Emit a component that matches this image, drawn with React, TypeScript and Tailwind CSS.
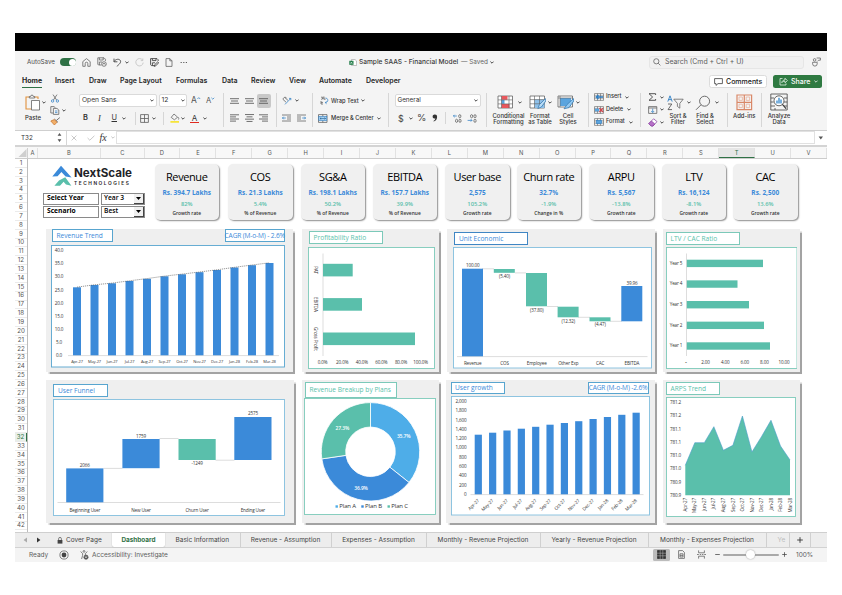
import type { ReactNode } from "react";

const BLUE = "#3b8ad9";
const TEAL = "#5abfab";
const MONTHS = ["Apr-27", "May-27", "Jun-27", "Jul-27", "Aug-27", "Sep-27", "Oct-27", "Nov-27", "Dec-27", "Jan-28", "Feb-28", "Mar-28"];

type IconProps = { w: number; h: number; className?: string; children: ReactNode };

const Icon = ({ w, h, className = "", children }: IconProps) => (
  <svg width={w} height={h} viewBox={`0 0 ${w} ${h}`} className={`shrink-0 ${className}`} fill="none" stroke="#5c5c5c" strokeWidth={0.75}>
    {children}
  </svg>
);

const Chevron = ({ className = "" }: { className?: string }) => (
  <Icon w={4} h={3} className={className}>
    <path d="M0.4 0.6 L2 2.2 L3.6 0.6" stroke="#333" strokeWidth={0.9} />
  </Icon>
);

const Divider = ({ className = "" }: { className?: string }) => (
  <div className={`w-px shrink-0 bg-[#d6d6d6] ${className}`} />
);

/* ---------- Title bar ---------- */

const TitleBar = () => (
  <div className="flex h-[22px] items-center text-[#4a4a4a]">
    <span className="ml-[12px] w-[33px] text-[6.2px]">AutoSave</span>
    <div className="flex h-[8px] w-[16px] items-center justify-end rounded-full bg-[#2f7145] pr-[0.5px]">
      <div className="size-[7px] rounded-full bg-white" />
    </div>
    <Icon w={9} h={9} className="ml-[6px]">
      <path d="M0.8 3.6 L4.5 0.6 L8.2 3.6 V8.3 H5.8 V5.5 A1.3 1.3 0 0 0 3.2 5.5 V8.3 H0.8 Z" />
    </Icon>
    <Icon w={10} h={10} className="ml-[6px]">
      <path d="M4.5 8 H1.5 L0.8 7.2 V0.8 H7 L8.4 2.2 V4 M2.4 0.8 V3 H6.2 V0.8 M2.4 8 V5 H5" />
      <circle cx="7" cy="7" r="2.3" />
      <path d="M5.8 7.6 L7 6 L8.2 7.6" />
    </Icon>
    <Icon w={9} h={9} className="ml-[6px]">
      <path d="M1 0.6 V3.8 H4.4 M1 3.6 C2.8 0.8 6.2 0.6 7.4 2.6 C8.3 4.6 6 6.5 3.8 8.4" stroke="#444" strokeWidth={0.9} />
    </Icon>
    <Chevron className="ml-[3px]" />
    <Icon w={9} h={9} className="ml-[6px]">
      <path d="M7.6 2.2 A3.7 3.7 0 1 0 8.2 4.6 M7.8 0.5 V2.6 H5.8" stroke="#bdbdbd" />
    </Icon>
    <Icon w={9} h={9} className="ml-[6px]">
      <path d="M4 7.6 H1.4 L0.6 6.8 V0.6 H7 L8.2 1.8 V3 M2.4 0.6 V2.6 H6 V0.6 M2.4 7.6 V4.8 H5 M4.2 8.4 L4.8 6.6 L7.8 3.8 L8.7 4.7 L5.8 7.8 Z" stroke="#444" strokeWidth={0.9} />
    </Icon>
    <Icon w={8} h={9} className="ml-[6px]">
      <path d="M1 0.6 H4.8 L7 2.8 V8.4 H1 Z M4.8 0.6 V2.8 H7" />
    </Icon>
    <Icon w={8} h={3} className="ml-[7px]">
      <path d="M0.6 1.5 h1.2 M3.2 1.5 h1.2 M5.8 1.5 h1.2" strokeWidth={1.1} />
    </Icon>
    <Icon w={8} h={7} className="ml-[161px]">
      <path d="M2.5 0.5 H6 L7.6 2 V6.5 H2.5 Z" fill="#fff" stroke="#9a9a9a" strokeWidth={0.6} />
      <rect x="0.3" y="1.8" width="4.2" height="4" fill="#1d7a45" stroke="none" />
      <path d="M1.5 2.8 L3.3 4.8 M3.3 2.8 L1.5 4.8" stroke="#fff" strokeWidth={0.6} />
    </Icon>
    <span className="ml-[2px] w-[102px] text-[6.6px] font-medium text-[#3a3a3a]">Sample SAAS - Financial Model</span>
    <span className="w-[28px] text-[6.4px] text-[#666]">— Saved</span>
    <Chevron className="ml-px" />
    <div className="ml-[155px] flex h-[13px] w-[155px] items-center rounded-[3px] border border-[#e6e6e6] bg-[#f1f1f1]">
      <Icon w={8} h={8} className="ml-[3px]">
        <circle cx="3.3" cy="3.3" r="2.6" />
        <path d="M5.2 5.2 L7.4 7.4" />
      </Icon>
      <span className="ml-[4px] text-[6.9px] text-[#5c5c5c]">Search (Cmd + Ctrl + U)</span>
    </div>
    <Icon w={9} h={10} className="ml-[8px]">
      <circle cx="2.6" cy="2.9" r="1.3" />
      <path d="M0.6 5.3 H5.2 V6.8 A2.3 2.3 0 0 1 0.6 6.8 Z M4.6 1 H8.4 V3.2 H6.6 L5.4 4.4" />
    </Icon>
  </div>
);

const MENU = [
  { label: "Home", width: "w-[33px]", active: true },
  { label: "Insert", width: "w-[34px]" },
  { label: "Draw", width: "w-[31px]" },
  { label: "Page Layout", width: "w-[56px]" },
  { label: "Formulas", width: "w-[46px]" },
  { label: "Data", width: "w-[29px]" },
  { label: "Review", width: "w-[38px]" },
  { label: "View", width: "w-[30px]" },
  { label: "Automate", width: "w-[47px]" },
  { label: "Developer", width: "w-[343px]" },
];

const MenuBar = () => (
  <div className="flex h-[18px] pl-[7px]">
    {MENU.map((item) => (
      <div key={item.label} className={`shrink-0 pt-[4px] text-[7px] text-[#262626] ${item.width} ${item.active ? "font-bold" : "font-semibold"}`}>
        <span className={`inline-block h-[11px] ${item.active ? "border-b-[1.5px] border-[#2f7145]" : ""}`}>{item.label}</span>
      </div>
    ))}
    <div className="mt-[2px] flex h-[13px] w-[58px] shrink-0 items-center rounded-[2.5px] border border-[#dcdcdc] bg-white pl-[4px] text-[7px] font-medium text-[#222]">
      <Icon w={9} h={8} className="mr-[3px]">
        <path d="M0.6 0.6 H8.4 V5.6 H4 L2 7.4 V5.6 H0.6 Z" stroke="#333" />
      </Icon>
      Comments
    </div>
    <div className="mt-[2px] ml-[6px] flex h-[13px] w-[49px] shrink-0 items-center rounded-[2.5px] bg-[#2f7a42] pl-[6px] text-[7px] font-medium text-white">
      <Icon w={9} h={9} className="mr-[3px]">
        <path d="M3.5 1.5 H1 V8 H7 V6.4 M2.8 5.6 C3 3.8 4.4 3 6 3 V1.2 L8.4 3.6 L6 5.8 V4.3 C4.6 4.2 3.5 4.6 2.8 5.6 Z" stroke="#e8f4ea" />
      </Icon>
      <span className="w-[23px]">Share</span>
      <Icon w={4} h={3}>
        <path d="M0.4 0.6 L2 2.2 L3.6 0.6" stroke="#fff" />
      </Icon>
    </div>
  </div>
);

/* ---------- Ribbon ---------- */

const Lines = ({ widths, className = "" }: { widths: number[]; className?: string }) => (
  <Icon w={9} h={8} className={className}>
    {widths.map((w, i) => (
      <path key={i} d={`M${(9 - w) / 2} ${4 + (i - (widths.length - 1) / 2) * 2.3} h${w}`} stroke="#4d4d4d" strokeWidth={0.8} />
    ))}
  </Icon>
);

const LeftLines = ({ right = false, className = "" }: { right?: boolean; className?: string }) => (
  <Icon w={9} h={8} className={className}>
    {[9, 6, 9, 6].map((w, i) => (
      <path key={i} d={`M${right ? 9 - w : 0} ${0.8 + i * 2.1} h${w}`} stroke="#4d4d4d" strokeWidth={0.8} />
    ))}
  </Icon>
);

const Indent = ({ className = "" }: { className?: string }) => (
  <Icon w={9} h={8} className={className}>
    <path d="M0 1 H9 M5 3 H9 M5 5 H9 M0 7 H9" />
    <path d="M0.4 4 H3.8 M1.7 2.7 L0.4 4 L1.7 5.3" stroke="#2f7fc4" />
  </Icon>
);

const CellsIcon = ({ mark }: { mark: "insert" | "delete" | "format" }) => (
  <Icon w={10} h={8}>
    <path d="M0.5 0.6 H9.5 V7.4 H0.5 Z M0.5 2.9 H9.5 M0.5 5.1 H9.5 M3.5 0.6 V7.4 M6.5 0.6 V7.4" strokeWidth={0.6} />
    {mark === "insert" && <path d="M2.5 4 H9 M4.4 2 L2.4 4 L4.4 6" stroke="#2f7fc4" strokeWidth={1.4} />}
    {mark === "delete" && (
      <>
        <rect x="1" y="2.6" width="4" height="2.8" fill="#5aa4de" stroke="none" />
        <path d="M5.4 2.2 L9 6 M9 2.2 L5.4 6" stroke="#d9434a" strokeWidth={1.1} />
      </>
    )}
    {mark === "format" && <rect x="2.5" y="2.4" width="5" height="3.2" fill="#5aa4de" stroke="#2f7fc4" strokeWidth={0.6} />}
  </Icon>
);

const BigLabel = ({ children }: { children: ReactNode }) => (
  <div className="text-center text-[5.9px] leading-[6.6px] font-medium text-[#333]">{children}</div>
);

const GridIcon = ({ variant }: { variant: "conditional" | "table" | "cell" }) => (
  <Icon w={17} h={15}>
    {variant === "cell" ? (
      <path d="M1 1 H15.5 V12 H1 Z" fill="#fff" />
    ) : (
      <path d="M1 1 H15.5 V13 H1 Z" fill="#fff" />
    )}
    {variant === "conditional" && (
      <>
        <rect x="4.5" y="1" width="6" height="3.8" fill="#e8575c" stroke="none" />
        <rect x="4.5" y="5" width="3" height="3.8" fill="#5aa4de" stroke="none" />
        <rect x="4.5" y="9" width="8" height="4" fill="#e8575c" stroke="none" />
        <path d="M1 4.9 H15.5 M1 8.9 H15.5 M4.5 1 V13 M12 1 V13" strokeWidth={0.6} />
      </>
    )}
    {variant === "table" && (
      <>
        <rect x="5.5" y="4.5" width="10" height="8.5" fill="#8fc1ea" stroke="none" />
        <path d="M1 4.6 H15.5 M1 8.8 H15.5 M5.5 1 V13 M10.5 1 V13" strokeWidth={0.6} />
        <path d="M16.4 3.6 L10.4 9.6 L8.8 13.6 L12.4 12 L16.8 6 Z" fill="#b9dcf6" stroke="#3477ad" />
      </>
    )}
    {variant === "cell" && (
      <>
        <rect x="3" y="3" width="11" height="8" fill="#5aa4de" stroke="none" />
        <path d="M1 3 H15.5 M3 1 V12" strokeWidth={0.6} />
        <path d="M16.4 3.6 L10 9.6 L7 13.8 L12 12.6 L16.8 6 Z" fill="#8fc8f2" stroke="#3477ad" />
      </>
    )}
  </Icon>
);

const Ribbon = () => (
  <div className="flex h-[39.5px] border-b border-[#cfcfcf] text-[#333]">
    <div className="ml-[10px] w-[22px] shrink-0 pt-[3px]">
      <div className="flex items-center">
        <Icon w={16} h={17}>
          <path d="M6 15 H1 V3 H4.5 M9.5 3 H13 V5" stroke="#e0913c" strokeWidth={1.1} />
          <path d="M4.3 4 V2.5 H5.6 A1.4 1.4 0 0 1 8.4 2.5 H9.7 V4 Z" />
          <path d="M6.5 6.5 H14.5 V16 H6.5 Z" fill="#fff" />
        </Icon>
        <Chevron className="ml-px" />
      </div>
      <span className="block pt-[2.5px] text-[6px] leading-[7px] font-medium">Paste</span>
    </div>
    <div className="ml-[2.5px] w-[29.5px] shrink-0 pt-[3px]">
      <Icon w={10} h={9}>
        <path d="M3 0.6 L6.6 6 M7 0.6 L3.4 6" />
        <circle cx="2.6" cy="7" r="1.2" stroke="#2f7fc4" />
        <circle cx="7.4" cy="7" r="1.2" stroke="#2f7fc4" />
      </Icon>
      <div className="mt-[2.5px] flex items-center">
        <Icon w={10} h={9}>
          <path d="M3 7 H0.8 V0.6 H4 L5.6 2 M3.4 2.4 H7 L8.8 4 V8.4 H3.4 Z" />
          <path d="M5 5 h2.4 M5 6.6 h2.4" stroke="#2f7fc4" />
        </Icon>
        <Chevron className="ml-[2.5px]" />
      </div>
      <Icon w={11} h={9} className="mt-[2.5px]">
        <path d="M9.8 0.6 L6.4 3.4 M4.4 2 L8 5.4" stroke="#444" />
        <path d="M4.2 2.6 L0.8 4 L4.4 8 L7 5.2 Z" fill="#f2b06a" stroke="#c9752e" />
      </Icon>
    </div>
    <div className="w-[144px] shrink-0 pt-[3px]">
      <div className="flex h-[13px] items-center text-[6.7px]">
        <div className="flex h-[13px] w-[78px] items-center justify-between rounded-[2px] border border-[#dadada] bg-white px-[2px]">
          <span>Open Sans</span>
          <Chevron />
        </div>
        <div className="ml-[2px] flex h-[13px] w-[28px] items-center justify-between rounded-[2px] border border-[#dadada] bg-white px-[1.5px]">
          <span>12</span>
          <Chevron />
        </div>
        <span className="ml-[4px] text-[8.5px] text-[#555]">A</span>
        <Icon w={4} h={8}>
          <path d="M0.4 2 L1.8 0.6 L3.2 2" stroke="#2f7fc4" />
        </Icon>
        <span className="ml-[5px] text-[7.6px] text-[#555]">A</span>
        <Icon w={4} h={8}>
          <path d="M0.4 0.8 L1.8 2.2 L3.2 0.8" stroke="#2f7fc4" />
        </Icon>
      </div>
      <div className="mt-[4px] flex h-[14px] items-center text-[7.4px]">
        <span className="w-[14px] pl-[4px] font-semibold">B</span>
        <span className="w-[15px] pl-[5px] font-[Liberation_Serif] text-[8.5px] italic">I</span>
        <span className="w-[14px] pl-[3.5px] underline">U</span>
        <Chevron />
        <Divider className="ml-[8.5px] h-[13px]" />
        <Icon w={9} h={9} className="ml-[4px]">
          <path d="M0.6 0.6 H8.4 V8.4 M0.6 0.6 V8.4 M4.5 0.6 V8.4 M0.6 4.5 H8.4 M0.6 8.4 H8.4" strokeWidth={0.8} />
        </Icon>
        <Chevron className="ml-[3px]" />
        <Divider className="ml-[7px] h-[13px]" />
        <Icon w={10} h={10} className="ml-[6px]">
          <path d="M4 1 L7.6 4.2 L4.4 6.8 L1.2 4.4 Z M7.8 4 C9 5 9 6.2 8.4 6.6" />
          <path d="M0.4 8.9 H9" stroke="#f7e326" strokeWidth={1.6} />
        </Icon>
        <Chevron className="ml-[1.5px]" />
        <div className="ml-[5px] flex h-[10px] w-[9px] items-center justify-center border-b-[1.7px] border-[#e02b20] text-[8px] leading-none">A</div>
        <Chevron className="ml-[4px]" />
      </div>
    </div>
    <Divider className="mt-[2px] h-[34px]" />
    <div className="w-[52px] shrink-0 pt-[3px]">
      <div className="flex h-[13px] items-center">
        <Lines widths={[9, 7, 9]} className="ml-[6px]" />
        <Lines widths={[9, 7, 9]} className="ml-[5.5px]" />
        <div className="ml-[3px] flex h-[14px] w-[14px] items-center justify-center rounded-[2px] bg-[#c8c8c8]">
          <Lines widths={[9, 7, 9]} />
        </div>
      </div>
      <div className="mt-[4px] flex h-[14px] items-center">
        <LeftLines className="ml-[6px]" />
        <Lines widths={[9, 6, 9, 6]} className="ml-[5.5px]" />
        <LeftLines right className="ml-[5.5px]" />
      </div>
    </div>
    <Divider className="mt-[2px] h-[34px]" />
    <div className="w-[35px] shrink-0 pt-[3px]">
      <div className="flex h-[13px] items-center">
        <Icon w={10} h={9} className="ml-[5px]">
          <path d="M1 3.4 L4 6.2 M2.6 1.4 L6 4.4 M1 3.4 C1 1.4 4 0.6 4.6 2.2" />
          <path d="M3 8.4 L8.8 2.4 M8.8 4.2 V2.4 H7" stroke="#2f7fc4" />
        </Icon>
        <Chevron className="ml-[3px]" />
      </div>
      <div className="mt-[4px] flex h-[14px] items-center">
        <Indent className="ml-[4.5px]" />
        <Indent className="ml-[6px] -scale-x-100" />
      </div>
    </div>
    <Divider className="mt-[2px] h-[34px]" />
    <div className="w-[75px] shrink-0 pt-[3px] text-[5.7px] font-medium">
      <div className="flex h-[13px] items-center">
        <Icon w={9} h={9} className="ml-[6.5px]">
          <path d="M1 1.4 A1 1 0 1 1 1 3 M3 0.6 V3.4 M4 0.6 V3.2 H5.6 M1 5 V8 H3 M1 6.4 H3" />
          <path d="M5.5 2 C8.6 2 8.6 6.6 5.4 6.6 M6.6 5.4 L5.2 6.6 L6.6 7.8" stroke="#2f7fc4" />
        </Icon>
        <span className="ml-[2.5px] w-[30px]">Wrap Text</span>
        <Chevron />
      </div>
      <div className="mt-[4px] flex h-[14px] items-center">
        <Icon w={10} h={9} className="ml-[5px]">
          <path d="M0.5 0.6 H9 V8.4 H0.5 Z M4.8 0.6 V2.6 M4.8 6.4 V8.4" />
          <rect x="0.8" y="2.6" width="8" height="3.8" fill="#a9d3f3" stroke="#2f7fc4" strokeWidth={0.6} />
          <path d="M2 4.5 H7.6 M3.2 3.6 L2 4.5 L3.2 5.4 M6.4 3.6 L7.6 4.5 L6.4 5.4" stroke="#245f91" strokeWidth={0.6} />
        </Icon>
        <span className="ml-[3px] w-[46px]">Merge &amp; Center</span>
        <Chevron />
      </div>
    </div>
    <Divider className="mt-[2px] h-[34px]" />
    <div className="w-[96.5px] shrink-0 pt-[3px]">
      <div className="ml-[5.5px] flex h-[13px] w-[86px] items-center justify-between rounded-[2px] border border-[#dadada] bg-white px-[2px] text-[6.3px]">
        <span>General</span>
        <Chevron />
      </div>
      <div className="mt-[4px] flex h-[14px] items-center text-[9px] text-[#444]">
        <span className="ml-[9px] w-[11px]">$</span>
        <Chevron />
        <span className="ml-[4px] w-[15px] text-[9.5px]">%</span>
        <Icon w={6} h={8} className="mr-[7px]">
          <path d="M3 0.6 A2 2 0 1 0 3.4 4.4 C3.2 5.6 2.4 6.4 1.4 6.9 L1.8 7.6 C4 6.8 5.2 5 5.1 2.8 A2.1 2.1 0 0 0 3 0.6 Z" fill="#333" stroke="none" />
        </Icon>
        <Divider className="h-[12px]" />
        <Icon w={9} h={9} className="ml-[7px]">
          <path d="M0.4 2 H3.8 M1.6 0.8 L0.4 2 L1.6 3.2" stroke="#2f7fc4" />
          <ellipse cx="6.8" cy="2.2" rx="1.1" ry="1.6" />
          <ellipse cx="3.6" cy="6.8" rx="1.1" ry="1.6" />
          <ellipse cx="7" cy="6.8" rx="1.1" ry="1.6" />
        </Icon>
        <Icon w={10} h={9} className="ml-[5px]">
          <ellipse cx="4.6" cy="2.2" rx="1.1" ry="1.6" />
          <ellipse cx="8" cy="2.2" rx="1.1" ry="1.6" />
          <ellipse cx="8" cy="6.8" rx="1.1" ry="1.6" />
          <path d="M0.6 6.4 H5 M3.8 5.2 L5 6.4 L3.8 7.6" stroke="#2f7fc4" />
        </Icon>
      </div>
    </div>
    <Divider className="mt-[2px] h-[34px]" />
    <div className="flex w-[101px] shrink-0 pt-[3px]">
      <div className="ml-[4px] w-[36px]">
        <div className="flex h-[18.5px] items-center pb-[2px] pl-[6.5px]">
          <GridIcon variant="conditional" />
          <Chevron className="ml-[4px]" />
        </div>
        <BigLabel>Conditional<br />Formatting</BigLabel>
      </div>
      <div className="w-[27px]">
        <div className="flex h-[18.5px] items-center pb-[2px] pl-[2px]">
          <GridIcon variant="table" />
          <Chevron className="ml-[2px]" />
        </div>
        <BigLabel>Format<br />as Table</BigLabel>
      </div>
      <div className="w-[29px]">
        <div className="flex h-[18.5px] items-center pb-[2px] pl-[3px]">
          <GridIcon variant="cell" />
          <Chevron className="ml-[2px]" />
        </div>
        <BigLabel>Cell<br />Styles</BigLabel>
      </div>
    </div>
    <Divider className="mt-[2px] h-[34px]" />
    <div className="w-[51px] shrink-0 pl-[5px] text-[5.6px] font-medium">
      <div className="flex h-[12.5px] items-center">
        <CellsIcon mark="insert" />
        <span className="ml-[2.5px] w-[19px]">Insert</span>
        <Chevron />
      </div>
      <div className="flex h-[12.5px] items-center">
        <CellsIcon mark="delete" />
        <span className="ml-[2.5px] w-[21px]">Delete</span>
        <Chevron />
      </div>
      <div className="flex h-[12.5px] items-center">
        <CellsIcon mark="format" />
        <span className="ml-[2.5px] w-[23px]">Format</span>
        <Chevron />
      </div>
    </div>
    <Divider className="mt-[2px] h-[34px]" />
    <div className="w-[24px] shrink-0 pl-[7px]">
      <div className="flex h-[12.5px] items-center">
        <Icon w={9} h={8}>
          <path d="M7.6 2 V0.7 H1 L4.6 4 L1 7.3 H7.6 V6" stroke="#444" strokeWidth={0.9} />
        </Icon>
        <Chevron className="ml-[3.5px]" />
      </div>
      <div className="flex h-[12.5px] items-center">
        <Icon w={10} h={8}>
          <path d="M0.6 0.6 H8.8 V7.4 H0.6 Z M0.6 2 H8.8" />
          <path d="M4.7 2.6 V6.4 M3.2 5 L4.7 6.5 L6.2 5" stroke="#2f7fc4" />
        </Icon>
        <Chevron className="ml-[2.5px]" />
      </div>
      <div className="flex h-[12.5px] items-center">
        <Icon w={10} h={9}>
          <path d="M5.6 0.8 L9 3.6 L5 8 L3.2 8 L0.8 5.6 Z" fill="#fff" stroke="#8a3fa0" />
          <path d="M3.4 3 L6.8 6 L5 8 L3.2 8 L0.8 5.6 Z" fill="#b671c8" stroke="#8a3fa0" />
        </Icon>
        <Chevron className="ml-[2.5px]" />
      </div>
    </div>
    <div className="flex w-[62.5px] shrink-0 pt-[3px]">
      <div className="w-[27px]">
        <div className="flex h-[18.5px] items-center pb-[1px] pl-[2px]">
          <Icon w={17} h={16}>
            <path d="M0.8 6.6 L3 0.8 L5.2 6.6 M1.6 4.6 H4.4" stroke="#2f7fc4" strokeWidth={0.9} />
            <path d="M1 9 H4.8 L1 14.6 H5" strokeWidth={0.9} />
            <path d="M6.8 4.2 H16.2 L12.8 8.4 V13.2 L10.4 11.4 V8.4 Z" />
          </Icon>
          <Chevron className="ml-[3px]" />
        </div>
        <BigLabel>Sort &amp;<br />Filter</BigLabel>
      </div>
      <div className="w-[27px]">
        <div className="flex h-[18.5px] items-center pb-[1px] pl-[3px]">
          <Icon w={16} h={16}>
            <circle cx="9.6" cy="6.2" r="5" strokeWidth={0.9} />
            <path d="M6 9.8 L1 14.8" strokeWidth={0.9} />
          </Icon>
          <Chevron className="ml-[4px]" />
        </div>
        <BigLabel>Find &amp;<br />Select</BigLabel>
      </div>
    </div>
    <Divider className="mt-[2px] h-[34px]" />
    <div className="w-[32.5px] shrink-0 pt-[2.5px]">
      <div className="flex h-[19px] justify-center pb-[2px]">
        <Icon w={17} h={17}>
          <path d="M1 1 H15.6 V15.6 H1 Z M8.3 1 V15.6 M1 8.3 H15.6" stroke="#d98868" strokeWidth={1.2} />
          <path d="M3 3 H6.4 V6.4 H3 Z M10.2 3 H13.6 V6.4 H10.2 Z M3 10.2 H6.4 V13.6 H3 Z M10.2 10.2 H13.6 V13.6 H10.2 Z" stroke="#e8b39e" strokeWidth={0.8} />
        </Icon>
      </div>
      <BigLabel>Add-ins</BigLabel>
    </div>
    <Divider className="mt-[2px] h-[34px]" />
    <div className="w-[35px] shrink-0 pt-[2px]">
      <div className="flex h-[19.5px] justify-center">
        <Icon w={18} h={18}>
          <path d="M0.8 1 H17.2 V17 H0.8 Z M0.8 5 H4 M14 5 H17.2 M0.8 9 H3.6 M14 9 H17.2 M0.8 13 H5 M14 13 H17.2 M5 15 V17" stroke="#444" strokeWidth={0.8} />
          <circle cx="9" cy="7.8" r="5" fill="#fff" stroke="#333" />
          <path d="M12.4 11.4 L16 15.6" stroke="#333" strokeWidth={1.1} />
          <path d="M7 10.6 V7.6 M9 10.6 V4.8 M11 10.6 V6.6" stroke="#3f8fd0" strokeWidth={1.4} />
        </Icon>
      </div>
      <BigLabel>Analyze<br />Data</BigLabel>
    </div>
  </div>
);

const FormulaBar = () => (
  <div className="flex h-[14.5px] items-center bg-white text-[#333]">
    <span className="w-[42px] pt-px pl-[6px] text-[6.3px]">T32</span>
    <Icon w={5} h={11}>
      <path d="M0.6 3.8 L2.5 1 L4.4 3.8 Z M0.6 7.2 L2.5 10 L4.4 7.2 Z" fill="#555" stroke="none" />
    </Icon>
    <Divider className="ml-[4px] h-[14px]" />
    <Icon w={6} h={6} className="ml-[4px]">
      <path d="M0.6 0.6 L5.4 5.4 M5.4 0.6 L0.6 5.4" stroke="#b5b5b5" />
    </Icon>
    <Icon w={8} h={6} className="ml-[10px]">
      <path d="M0.6 3 L2.8 5.2 L7.4 0.8" stroke="#b5b5b5" />
    </Icon>
    <span className="ml-[4.5px] w-[10px] font-[Liberation_Serif] text-[10px] italic">fx</span>
    <Icon w={4} h={3} className="ml-[1px]">
      <path d="M0.4 0.6 L2 2.2 L3.6 0.6" stroke="#aaa" strokeWidth={0.7} />
    </Icon>
    <div className="ml-[1px] h-[13px] w-[699px] border border-[#e1e1e1]" />
    <Icon w={11} h={10}>
      <path d="M3.6 3.6 H8 L5.8 6.6 Z" fill="#555" stroke="none" />
    </Icon>
  </div>
);

/* ---------- Sheet frame ---------- */

const COLUMNS = "DEFGHIJKLMNOPQRSTUV".split("");

const ColumnHeaders = () => (
  <div className="flex h-[12px] border-b border-[#cccccc] bg-[#f8f8f8] pt-px text-[5.8px] text-[#555]">
    <div className="flex w-[13px] shrink-0 justify-end border-r border-[#d0d0d0]">
      <Icon w={9} h={10}>
        <path d="M8.5 1 V9 H0.5 Z" fill="#cfcfcf" stroke="none" />
      </Icon>
    </div>
    <div className="flex w-[10px] shrink-0 items-center justify-center border-r border-[#e2e2e2]">A</div>
    <div className="flex w-[63px] shrink-0 items-center justify-center border-r border-[#e2e2e2]">B</div>
    <div className="flex w-[43.5px] shrink-0 items-center justify-center border-r border-[#e2e2e2]">C</div>
    {COLUMNS.map((name) => (
      <div
        key={name}
        className={`flex w-[35.93px] shrink-0 items-center justify-center border-r ${name === "T" ? "border-b-[1.5px] border-r-[#e2e2e2] border-b-[#2f7145] bg-[#e6e6e6] text-[#2f7145]" : "border-[#e2e2e2]"}`}
      >
        {name}
      </div>
    ))}
  </div>
);

const RowHeaders = () => (
  <div className="w-[13px] shrink-0 overflow-hidden border-r border-[#bdbdbd] text-[6.2px] text-[#555]">
    {Array.from({ length: 42 }, (_, i) => i + 1).map((n) => (
      <div
        key={n}
        className={`flex h-[8.854px] items-center justify-center border-b border-[#ebebeb] ${n === 32 ? "border-r-[1.5px] border-r-[#2f7145] bg-[#e9efe9] text-[#2f7145]" : ""}`}
      >
        {n}
      </div>
    ))}
  </div>
);

/* ---------- Top strip: logo, selectors, KPI cards ---------- */

const Selector = ({ label, value }: { label: string; value: string }) => (
  <div className="flex h-[11.5px] font-[Open_Sans] text-[6.7px] text-black">
    <div className="flex w-[56px] items-center border border-[#8a8a8a] pl-[3px] font-bold">{label}</div>
    <div className="ml-[1.5px] flex w-[44.5px] items-center justify-between border border-[#8a8a8a] pl-[2.5px] font-semibold">
      {value}
      <div className="flex h-[9.5px] w-[10px] items-center justify-center border-r-[1.5px] border-b-[1.5px] border-[#444] bg-[#f0f0f0]">
        <Icon w={5} h={3}>
          <path d="M0 0 H5 L2.5 3 Z" fill="#000" stroke="none" />
        </Icon>
      </div>
    </div>
  </div>
);

const Brand = () => (
  <div className="w-[102px] shrink-0">
    <div className="flex h-[24px] pl-[8.5px]">
      <svg width="20" height="22" viewBox="0 0 20 22" className="mt-[1px] shrink-0">
        <path d="M0.3 11.6 L9 0.8 L19.6 12.4 L13.6 11.4 L9.4 7 L5.6 11.2 Z" fill={BLUE} />
        <path d="M7 15.4 L13.2 12.2 L19.4 20.8 L14 19.6 L11.6 16.8 L8 20.8 H2.4 Z" fill={TEAL} />
      </svg>
      <div className="ml-[2.5px] pt-[3.5px] text-[#1f2328]">
        <div className="text-[11.6px] leading-[12px] font-bold">NextScale</div>
        <div className="pt-[1px] text-[4.8px] leading-[6px] font-semibold tracking-[1.55px]">TECHNOLOGIES</div>
      </div>
    </div>
    <div className="mt-[5.5px] flex flex-col gap-[1.5px]">
      <Selector label="Select Year" value="Year 3" />
      <Selector label="Scenario" value="Best" />
    </div>
  </div>
);

const KPIS = [
  { title: "Revenue", value: "Rs. 394.7 Lakhs", pct: "82%", note: "Growth rate", gap: "ml-[9.5px]" },
  { title: "COS", value: "Rs. 21.3 Lakhs", pct: "5.4%", note: "% of Revenue", gap: "ml-[9px]" },
  { title: "SG&A", value: "Rs. 198.1 Lakhs", pct: "50.2%", note: "% of Revenue", gap: "ml-[8px]" },
  { title: "EBITDA", value: "Rs. 157.7 Lakhs", pct: "39.9%", note: "% of Revenue", gap: "ml-[7.5px]" },
  { title: "User base", value: "2,575", pct: "105.2%", note: "Growth rate", gap: "ml-[8px]" },
  { title: "Churn rate", value: "32.7%", pct: "-1.9%", note: "Change in %", gap: "ml-[7px]" },
  { title: "ARPU", value: "Rs. 5,567", pct: "-13.8%", note: "Growth rate", gap: "ml-[8px]" },
  { title: "LTV", value: "Rs. 16,124", pct: "-8.1%", note: "Growth rate", gap: "ml-[8px]" },
  { title: "CAC", value: "Rs. 2,500", pct: "13.6%", note: "Growth rate", gap: "ml-[7px]" },
];

const KpiCard = ({ title, value, pct, note, gap }: (typeof KPIS)[number]) => (
  <div className={`h-[56px] w-[64.5px] shrink-0 rounded-[5px] bg-[#f0f0f0] text-center font-[Open_Sans] shadow-[1px_1px_1.5px_#8f8f8f] ${gap}`}>
    <div className="pt-[6px] text-[11px] leading-[14px] tracking-[-0.4px] text-black">{title}</div>
    <div className="pt-[4.5px] text-[6.5px] leading-[9px] font-bold text-[#3b8ad9]">{value}</div>
    <div className="pt-[3px] text-[5.8px] leading-[8px] font-semibold text-[#5abfab]">{pct}</div>
    <div className="pt-[0.5px] text-[4.9px] leading-[8px] font-semibold text-[#333]">{note}</div>
  </div>
);

/* ---------- Chart panels ---------- */

const Panel = ({ className, children }: { className: string; children: ReactNode }) => (
  <div className={`h-[143px] shrink-0 bg-[#efefef] font-[Open_Sans] shadow-[1.5px_1.5px_1px_#a3a3a3] ${className}`}>{children}</div>
);

const Tag = ({ className, children }: { className: string; children: ReactNode }) => (
  <div className={`flex h-[12.5px] shrink-0 items-center border bg-white pt-[1.5px] text-[6.6px] font-medium ${className}`}>{children}</div>
);

// Charts share one coordinate space, so each only says which window of it it shows.
type ChartProps = { x: number; y: number; w: number; h: number; color: string; className?: string; children: ReactNode };

const Chart = ({ x, y, w, h, color, className = "", children }: ChartProps) => (
  <svg width={w} height={h} viewBox={`${x} ${y} ${w} ${h}`} className={`block ${className}`} fontSize={4.6} letterSpacing={-0.13} fill="#333" textAnchor="middle">
    <rect x={x + 0.5} y={y + 0.5} width={w - 1} height={h - 1} fill="#fff" stroke={color} strokeWidth={0.9} />
    {children}
  </svg>
);

const Line = ({ d }: { d: string }) => <path d={d} stroke="#cfcfcf" strokeWidth={0.7} fill="none" />;

const REVENUE_TOPS = [287.3, 285, 283.3, 281, 278.8, 276.3, 274.3, 272.2, 270, 267.5, 265.2, 263];

const RevenueTrend = () => (
  <Panel className="ml-[17.5px] w-[247.5px]">
    <div className="flex pt-[0.5px] pl-[6px]">
      <Tag className="w-[61px] border-[#58a5cf] pl-[4px] text-[#3b8ad9]">Revenue Trend</Tag>
      <Tag className="ml-[112px] w-[60.5px] justify-center border-[#58a5cf] text-[5.2px] tracking-[-0.15px] text-[#3b8ad9]">
        CAGR (M-o-M) - 2.6%
      </Tag>
    </div>
    <Chart x={51} y={245} w={234} h={122.5} color="#58a5cf" className="mt-[3.5px] ml-[5.5px]">
      {[40, 35, 30, 25, 20, 15, 10, 5, 0].map((v, i) => (
        <text key={v} x={59} y={252.3 + i * 13.08}>{v.toFixed(1)}</text>
      ))}
      <Line d="M68 355.6 H279" />
      {REVENUE_TOPS.map((top, i) => (
        <g key={i}>
          <rect x={73 + i * 17.5} y={top} width={8} height={355.3 - top} fill={BLUE} />
          <text x={77 + i * 17.5} y={363} fontSize={4}>{MONTHS[i]}</text>
        </g>
      ))}
      <polyline points={REVENUE_TOPS.map((top, i) => `${77 + i * 17.5},${top - 0.2}`).join(" ")} fill="none" stroke="#555" strokeWidth={0.6} strokeDasharray="1.2 0.8" />
    </Chart>
  </Panel>
);

const PROFIT = [
  { name: "PAT", y: 263.3, end: 352.7 },
  { name: "EBITDA", y: 297.6, end: 362 },
  { name: "Gross Profit", y: 332, end: 415 },
];

const ProfitabilityRatio = () => (
  <Panel className="ml-[9px] w-[137px]">
    <div className="pt-[2.5px] pl-[6.5px]">
      <Tag className="w-[74px] border-[#7cc9b9] pl-[4px] text-[#5abfab]">Profitability Ratio</Tag>
    </div>
    <Chart x={308} y={246.5} w={127} h={122} color="#7cc9b9" className="mt-[3px] ml-[6px]">
      <Line d="M323 253 V355.5" />
      {PROFIT.map((p) => (
        <g key={p.name}>
          <rect x={323} y={p.y} width={p.end - 323} height={12.6} fill={TEAL} />
          <text transform={`translate(313.8 ${p.y + 6.3}) rotate(90)`}>{p.name}</text>
        </g>
      ))}
      {["0.0%", "20.0%", "40.0%", "60.0%", "80.0%", "100.0%"].map((v, i) => (
        <text key={v} x={322.6 + i * 19.6} y={363}>{v}</text>
      ))}
    </Chart>
  </Panel>
);

const UNITS = [
  { name: "Revenue", label: "100.00", x: 462, top: 268.7, bottom: 356.3, labelY: 266.8 },
  { name: "COS", label: "(5.40)", x: 493.8, top: 269, bottom: 272.8, labelY: 277.5 },
  { name: "Employee", label: "(37.80)", x: 526, top: 273, bottom: 306.3, labelY: 311.5 },
  { name: "Other Exp", label: "(12.32)", x: 557.6, top: 306.7, bottom: 317.3, labelY: 322.5 },
  { name: "CAC", label: "(4.47)", x: 589.5, top: 317.3, bottom: 321.3, labelY: 326 },
  { name: "EBITDA", label: "39.96", x: 621.3, top: 286, bottom: 321.3, labelY: 284.5 },
];

const UnitEconomic = () => (
  <Panel className="ml-[8px] w-[207.5px]">
    <div className="pt-[3.5px] pl-[7px]">
      <Tag className="w-[74px] border-[#3f86c4] pl-[4px] text-[#3b8ad9]">Unit Economic</Tag>
    </div>
    <Chart x={453} y={247} w={199} h={121.5} color="#83bedd" className="mt-[2.5px] ml-[6px]">
      <Line d="M457 356.6 H647.5 M482 268.8 H494 M515 272.9 H526 M547 306.5 H558 M578 317.3 H590 M610 321.3 H622" />
      {UNITS.map((u) => (
        <g key={u.name}>
          <rect x={u.x} y={u.top} width={21} height={u.bottom - u.top} fill={u.name === "Revenue" || u.name === "EBITDA" ? BLUE : TEAL} />
          <text x={u.x + 10.7} y={u.labelY}>{u.label}</text>
          <text x={u.x + 10.7} y={364.6}>{u.name}</text>
        </g>
      ))}
    </Chart>
  </Panel>
);

const LTV_ENDS = [763, 737.5, 749, 764, 770];

const LtvCac = () => (
  <Panel className="ml-[8px] w-[137px]">
    <div className="pt-[3.5px] pl-[3px]">
      <Tag className="w-[74px] border-[#7cc9b9] pl-[4px] text-[#5abfab]">LTV / CAC Ratio</Tag>
    </div>
    <Chart x={666} y={246.5} w={131.5} h={122} color="#7cc9b9" className="mt-[2px] ml-[3px]">
      <Line d="M686.5 253 V355.5" />
      {LTV_ENDS.map((end, i) => (
        <g key={i}>
          <rect x={686.8} y={259.2 + i * 20.65} width={end - 686.8} height={7.4} fill={TEAL} />
          <text x={676} y={264.1 + i * 20.65}>{`Year ${5 - i}`}</text>
        </g>
      ))}
      {["-", "2.00", "4.00", "6.00", "8.00", "10.00"].map((v, i) => (
        <text key={v} x={686 + i * 19.6} y={363} fontWeight={v === "-" ? 700 : 400}>{v}</text>
      ))}
    </Chart>
  </Panel>
);

const FUNNEL = [
  { name: "Beginning User", label: "2066", x: 65.7, top: 468.4, bottom: 502.3, labelY: 466.8 },
  { name: "New User", label: "1759", x: 121.9, top: 439, bottom: 468.2, labelY: 437.6 },
  { name: "Churn User", label: "-1249", x: 178, top: 439, bottom: 460, labelY: 464.9 },
  { name: "Ending User", label: "2575", x: 233.8, top: 417, bottom: 460, labelY: 415.4 },
];

const UserFunnel = () => (
  <Panel className="ml-[17.5px] w-[248.5px]">
    <div className="pt-[4.5px] pl-[7.5px]">
      <Tag className="w-[55px] border-[#58a5cf] pl-[4px] text-[#3b8ad9]">User Funnel</Tag>
    </div>
    <Chart x={52.5} y={399} w={232} h={117} color="#83bedd" className="mt-[2.5px] ml-[7px]">
      <Line d="M57 502.5 H280 M103 468.4 H122 M159 438.5 H178 M215 460.2 H234" />
      {FUNNEL.map((f) => (
        <g key={f.name}>
          <rect x={f.x} y={f.top} width={37.2} height={f.bottom - f.top} fill={f.name === "Churn User" ? TEAL : BLUE} />
          <text x={f.x + 18.6} y={f.labelY}>{f.label}</text>
          <text x={f.x + 18.6} y={511.5}>{f.name}</text>
        </g>
      ))}
    </Chart>
  </Panel>
);

const arc = (from: number, to: number, cx: number, cy: number, R: number, r: number) => {
  const p = (t: number, rad: number) => `${cx + rad * Math.sin(t * 2 * Math.PI)} ${cy - rad * Math.cos(t * 2 * Math.PI)}`;
  return `M${p(from, R)} A${R} ${R} 0 0 1 ${p(to, R)} L${p(to, r)} A${r} ${r} 0 0 0 ${p(from, r)} Z`;
};

const PLANS = [
  { name: "Plan A", from: 0, to: 0.357, color: "#4eade8", label: "35.7%", lx: 403.7, ly: 438.6, legend: 335.5 },
  { name: "Plan B", from: 0.357, to: 0.727, color: BLUE, label: "36.9%", lx: 361, ly: 490.3, legend: 361.3 },
  { name: "Plan C", from: 0.727, to: 1, color: TEAL, label: "27.3%", lx: 342.3, ly: 430.2, legend: 387.5 },
];

const RevenueBreakup = () => (
  <Panel className="ml-[7.5px] w-[137.5px]">
    <div className="pt-[2.5px] pl-[3px]">
      <Tag className="h-[16px] w-[92px] border-[#7cc9b9] pl-[4px] text-[#5abfab]">Revenue Breakup by Plans</Tag>
    </div>
    <Chart x={304} y={398.5} w={132} h={117} color="#7cc9b9" className="ml-[2px]">
      {PLANS.map((p) => (
        <g key={p.name}>
          <path d={arc(p.from, p.to, 370.5, 452.3, 49.2, 24.8)} fill={p.color} stroke="#fff" strokeWidth={0.8} />
          <text x={p.lx} y={p.ly} fill="#fff" fontSize={5} fontWeight={600}>{p.label}</text>
          <rect x={p.legend} y={505.8} width={2.4} height={2.4} fill={p.color} />
          <text x={p.legend + 3.8} y={508.9} fontSize={6} textAnchor="start">{p.name}</text>
        </g>
      ))}
    </Chart>
  </Panel>
);

const GROWTH_TOPS = [434.7, 432.7, 430.5, 428.7, 426.8, 424.7, 423, 421.2, 419, 417, 414.8, 412.7];

const UserGrowth = () => (
  <Panel className="ml-[7px] w-[208.5px]">
    <div className="flex pt-[2px] pl-[4.5px]">
      <Tag className="w-[54px] border-[#58a5cf] pl-[3.5px] text-[#3b8ad9]">User growth</Tag>
      <Tag className="ml-[83px] w-[61px] justify-center border-[#58a5cf] text-[5.4px] tracking-[-0.15px] text-[#3b8ad9]">
        CAGR (M-o-M) -2.6%
      </Tag>
    </div>
    <Chart x={451} y={396} w={199} h={119.5} color="#83bedd" className="mt-[2px] ml-[4.5px]">
      {["2,000", "1,800", "1,600", "1,400", "1,200", "1,000", "800", "600", "400", "200", "0"].map((v, i) => (
        <text key={v} x={466.5} y={402.9 + i * 9.3} textAnchor="end">{v}</text>
      ))}
      <Line d="M470.5 494.6 H643.5" />
      {GROWTH_TOPS.map((top, i) => (
        <g key={i}>
          <rect x={474.7 + i * 14.35} y={top} width={7.2} height={494.3 - top} fill={BLUE} />
          <text transform={`translate(${479.5 + i * 14.35} 501) rotate(-45)`} textAnchor="end">{MONTHS[i]}</text>
        </g>
      ))}
    </Chart>
  </Panel>
);

const ARPS = [465.3, 442.7, 442.7, 426.7, 450.3, 445.3, 416, 452, 436.7, 420.3, 446, 460];

const ArpsTrend = () => {
  const points = ARPS.map((y, i) => `${685.3 + i * 9.52},${y}`).join(" ");
  return (
    <Panel className="ml-[8px] w-[137.5px]">
      <div className="pt-[2.5px] pl-[3px]">
        <Tag className="w-[54px] border-[#7cc9b9] pl-[4px] text-[#5abfab]">ARPS Trend</Tag>
      </div>
      <Chart x={666} y={397} w={130} h={120} color="#7cc9b9" className="mt-[2.5px] ml-[3px]">
        {["781.2", "781.2", "781.1", "781.1", "781.0", "781.0", "780.9", "780.9"].map((v, i) => (
          <text key={i} x={675.5} y={404 + i * 13.25}>{v}</text>
        ))}
        <polygon points={`685.3,495.3 ${points} 790,495.3`} fill={TEAL} />
        <polyline points={points} fill="none" stroke="#4a9cc9" strokeWidth={0.6} />
        {MONTHS.map((m, i) => (
          <text key={m} transform={`translate(${686.9 + i * 9.52} 498) rotate(-90)`} textAnchor="end">{m}</text>
        ))}
      </Chart>
    </Panel>
  );
};

/* ---------- Bottom bars ---------- */

const SHEETS = [
  { label: "Basic Information", width: "w-[75.5px]" },
  { label: "Revenue - Assumption", width: "w-[91px]" },
  { label: "Expenses - Assumption", width: "w-[95px]" },
  { label: "Monthly - Revenue Projection", width: "w-[114px]" },
  { label: "Yearly - Revenue Projection", width: "w-[108px]" },
  { label: "Monthly - Expenses Projection", width: "w-[118px]" },
];

const SheetTabs = () => (
  <div className="flex h-[15.5px] border-t border-b border-t-[#cfcfcf] border-b-[#d2d2d2] bg-[#ededed] text-[6.5px] text-[#444]">
    <div className="flex w-[97px] shrink-0 items-center pt-px">
      <Icon w={5} h={6} className="ml-[8px]">
        <path d="M4 0.5 V5.5 L0.6 3 Z" fill="#aaa" stroke="none" />
      </Icon>
      <Icon w={5} h={6} className="ml-[8px]">
        <path d="M1 0.5 V5.5 L4.4 3 Z" fill="#333" stroke="none" />
      </Icon>
      <Icon w={6} h={7} className="ml-[15.5px]">
        <path d="M0.6 3 H5.4 V6.6 H0.6 Z" fill="#444" stroke="none" />
        <path d="M1.6 3 V1.8 A1.4 1.4 0 0 1 4.4 1.8 V3" />
      </Icon>
      <span className="ml-[3.5px]">Cover Page</span>
    </div>
    <div className="flex w-[53px] shrink-0 items-center justify-center rounded-b-[2px] bg-white pt-px text-[6.4px] font-bold text-[#2f7145] shadow-[0_0_1px_#999]">Dashboard</div>
    {SHEETS.map((s) => (
      <div key={s.label} className={`flex shrink-0 items-center justify-center border-r border-[#d0d0d0] pt-px ${s.width}`}>
        {s.label}
      </div>
    ))}
    <div className="flex w-[23px] shrink-0 items-center border-r border-[#d0d0d0] pt-px pl-[11px] text-[#bbb]">Ye</div>
    <div className="flex w-[21.5px] shrink-0 items-center justify-center border-r border-[#d0d0d0]">
      <Icon w={6} h={6}>
        <path d="M3 0.2 V5.8 M0.2 3 H5.8" stroke="#333" strokeWidth={0.9} />
      </Icon>
    </div>
  </div>
);

const StatusBar = () => (
  <div className="flex h-[14.5px] items-center text-[6.5px] text-[#5c5c5c]">
    <span className="ml-[14px] w-[30px] pt-px">Ready</span>
    <Icon w={10} h={10}>
      <circle cx="5" cy="5" r="4.1" />
      <circle cx="5" cy="5" r="2.4" fill="#444" stroke="none" />
    </Icon>
    <Icon w={9} h={10} className="ml-[11px]">
      <circle cx="4" cy="1.4" r="0.9" />
      <path d="M0.6 1.6 L2.6 3.4 V5.4 L1.6 9 M7.4 1.6 L5.4 3.4 V5" />
      <circle cx="6" cy="7.2" r="2.1" fill="#555" />
      <path d="M5.2 6.4 L6.8 8 M6.8 6.4 L5.2 8" stroke="#fff" strokeWidth={0.6} />
    </Icon>
    <span className="ml-[3px] w-[561px] pt-px">Accessibility: Investigate</span>
    <div className="flex h-[12.5px] w-[17px] items-center justify-center rounded-[1.5px] bg-[#bcbcbc]">
      <Icon w={9} h={9}>
        <path d="M0.5 0.5 H8.5 V8.5 H0.5 Z" fill="#333" stroke="#333" />
        <path d="M3.2 0 V9 M5.8 0 V9 M0 3.2 H9 M0 5.8 H9" stroke="#bcbcbc" strokeWidth={0.5} />
      </Icon>
    </div>
    <Icon w={7} h={9} className="ml-[8px]">
      <path d="M0.6 0.6 H4.6 L6.4 2.4 V8.4 H0.6 Z M2 3.8 H5 V7 H2 Z M2 5.4 H5" />
    </Icon>
    <Icon w={9} h={9} className="ml-[12px]">
      <path d="M1.6 0.4 V2.8 H7.4 V0.4 M1.6 8.6 V6.2 H7.4 V8.6 M0 4.5 H1.8 M2.8 4.5 H4.2 M5 4.5 H6.4 M7.2 4.5 H9" />
    </Icon>
    <Icon w={5} h={5} className="ml-[9px]">
      <path d="M0.2 2.5 H4.8" stroke="#444" />
    </Icon>
    <div className="ml-[3px] flex h-[1.5px] w-[55.5px] items-center justify-center rounded-full bg-[#a9a9a9]">
      <div className="size-[9px] shrink-0 rounded-full bg-white shadow-[0_0_1.5px_#888]" />
    </div>
    <Icon w={5} h={5} className="ml-[3px]">
      <path d="M0.2 2.5 H4.8 M2.5 0.2 V4.8" stroke="#444" />
    </Icon>
    <span className="ml-[9.5px] pt-px">100%</span>
  </div>
);

const App = () => {
  return (
    <div className="h-[595px] w-[842px] overflow-hidden bg-white px-[15px] pt-[33px]">
      <div className="flex h-[529px] w-[812px] flex-col overflow-hidden bg-[#f4f4f4] font-[Inter,sans-serif] leading-none whitespace-nowrap">
        <div className="h-[18px] shrink-0 bg-black" />
        <TitleBar />
        <MenuBar />
        <Ribbon />
        <FormulaBar />
        <div className="h-[2px] shrink-0 bg-[#d4d4d4]" />
        <ColumnHeaders />
        <div className="flex h-[373px] shrink-0 bg-white">
          <RowHeaders />
          <div className="w-[799px] pt-[4.5px]">
            <div className="flex h-[57px] pl-[15px]">
              <Brand />
              {KPIS.map((kpi) => (
                <KpiCard key={kpi.title} {...kpi} />
              ))}
            </div>
            <div className="mt-[8px] flex h-[143px]">
              <RevenueTrend />
              <ProfitabilityRatio />
              <UnitEconomic />
              <LtvCac />
            </div>
            <div className="mt-[8px] flex h-[143px]">
              <UserFunnel />
              <RevenueBreakup />
              <UserGrowth />
              <ArpsTrend />
            </div>
          </div>
        </div>
        <SheetTabs />
        <StatusBar />
      </div>
    </div>
  );
};

export default App;
